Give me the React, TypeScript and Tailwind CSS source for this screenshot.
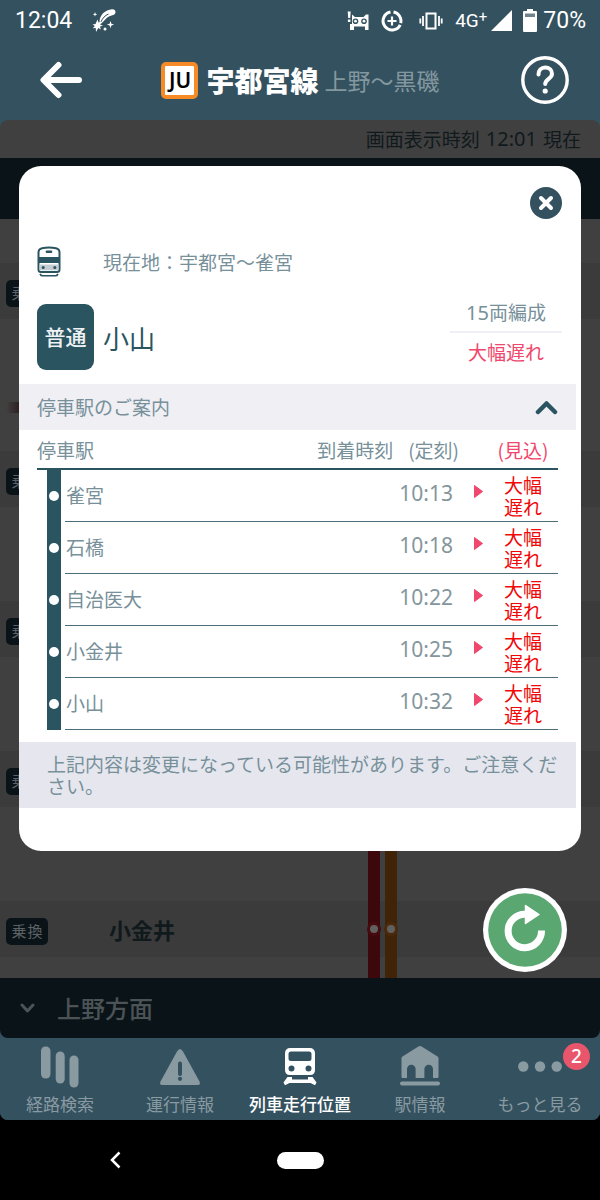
import React from "react";

type Stop = { name: string; time: string };

const stops: Stop[] = [
  { name: "雀宮", time: "10:13" },
  { name: "石橋", time: "10:18" },
  { name: "自治医大", time: "10:22" },
  { name: "小金井", time: "10:25" },
  { name: "小山", time: "10:32" },
];

function StatusBar() {
  return (
    <div className="flex h-10 items-center justify-between pl-[15px] pr-[14px] pt-px font-['Roboto',sans-serif] text-[23px] leading-none text-white">
      <div className="flex items-center gap-5">
        <span>12:04</span>
        <svg width="24" height="24" viewBox="0 0 24 24" fill="#fff" aria-hidden="true">
          <path d="M7.500 12C8 6 13 1 20 .3c3.500-.2 4.500 3 2.500 5-1.300 1.200-3 1-5 2-3.300 1.300-5 4.500-9 8z" />
          <path d="M9 13C10.500 9 13 6.500 16.500 5" fill="none" stroke="#345160" strokeWidth="1" />
          <path d="M5.500 10.500l1 3 3-1-1.300 3 2.800 1.200-3 .8.8 3-2.500-1.500L4 23l-.3-4-2.900.2 2-2.200-2.300-1.500 3-.5z" />
          <path d="M18.500 12l.9 2.700 2.700.9-2.700.9-.9 2.700-.9-2.700-2.700-.9 2.700-.9zM3 3l.6 1.700L5.300 5.300 3.600 6 3 7.600 2.400 6 .8 5.300l1.600-.6z" />
          <circle cx="13" cy="20" r="1.500" />
        </svg>
      </div>
      <div className="flex items-center">
        <svg className="mr-3" width="22" height="22" viewBox="0 0 22 22" aria-hidden="true">
          <path d="M.7 1.500h3l-.5 6.500h-2zM.9 9.500h2.500V12H.9zM5 4.500L8 7h8.500L19 4.500h2.500V20H18v-3.500H7V20H3v-6h2z" fill="#fff" />
          <circle cx="8.500" cy="11.200" r="2.800" fill="#345160" />
          <circle cx="17" cy="11.200" r="2.800" fill="#345160" />
          <circle cx="8.500" cy="11.200" r="1.400" fill="#fff" />
          <circle cx="17" cy="11.200" r="1.400" fill="#fff" />
        </svg>
        <svg className="mr-4" width="22" height="22" viewBox="0 0 22 22" fill="none" stroke="#fff" aria-hidden="true">
          <path d="M9.500 2.100a9 9 0 1 0 9.700 12.700M12.500 2.100a9 9 0 0 1 7.200 11" strokeWidth="3" />
          <path d="M11 6.500v9M6.500 11h9" strokeWidth="2.200" />
        </svg>
        <svg className="mr-3" width="24" height="20" viewBox="0 0 24 20" fill="none" stroke="#fff" aria-hidden="true">
          <rect x="7.500" y="2.500" width="9" height="15" strokeWidth="2" />
          <path d="M4 5v10M20 5v10M1.300 7.500v5M22.700 7.500v5" strokeWidth="1.800" />
        </svg>
        <span className="flex items-start text-[19px]">
          4G<span className="text-[15px] leading-[12px]">+</span>
        </span>
        <svg className="ml-1" width="22" height="21" viewBox="0 0 22 21" aria-hidden="true">
          <path d="M0 21L21 0v21z" fill="#fff" />
        </svg>
        <svg className="ml-[10px] mr-[6px]" width="14" height="23" viewBox="0 0 14 23" aria-hidden="true">
          <path d="M4 0h6v2h3a1 1 0 0 1 1 1v19a1 1 0 0 1-1 1H1a1 1 0 0 1-1-1V3a1 1 0 0 1 1-1h3z" fill="#fff" />
          <path d="M2 4.500h10V8H2z" fill="#6f838d" />
        </svg>
        <span>70%</span>
      </div>
    </div>
  );
}

function TitleBar() {
  return (
    <header className="grid h-20 grid-cols-[1fr_auto_1fr] items-center pl-8 pr-[31px]">
      <button type="button" aria-label="戻る" className="ml-2 justify-self-start">
        <svg width="44" height="38" viewBox="0 0 44 38" fill="none" stroke="#fff" strokeWidth="6" strokeLinecap="round" strokeLinejoin="round">
          <path d="M39 19H4M18.500 4L3.500 19l15 15" />
        </svg>
      </button>
      <h1 className="flex items-center text-white">
        <span className="mr-2 flex size-[37px] items-center justify-center rounded-[5px] border-4 border-[#f58a26] bg-white font-['Noto_Sans','Open_Sans',sans-serif] text-[21px] font-semibold leading-none text-black">
          JU
        </span>
        <span className="mr-[6px] text-[28px] font-black leading-10">宇都宮線</span>
        <span className="text-[23px] leading-10 text-[#83979f]">上野～黒磯</span>
      </h1>
      <button type="button" aria-label="ヘルプ" className="justify-self-end">
        <svg width="48" height="48" viewBox="0 0 48 48" fill="none" stroke="#fff" strokeLinecap="round" strokeLinejoin="round">
          <circle cx="24" cy="24" r="22.200" strokeWidth="3.400" />
          <path d="M17.500 18.500c0-4 2.800-7 6.700-7s6.800 2.700 6.800 6.200c0 5-6.800 5.200-6.800 10.300" strokeWidth="4" />
          <circle cx="24.200" cy="35" r="2.600" fill="#fff" stroke="none" />
        </svg>
      </button>
    </header>
  );
}

function Tracks({ dots }: { dots?: boolean }) {
  return (
    <div className="flex gap-[5px] self-stretch">
      <div className="flex w-3 items-center justify-center bg-[#3d080b]">
        {dots && <span className="size-[14px] shrink-0 rounded-full border-[3px] border-[#470b0e] bg-[#606060]" />}
      </div>
      <div className="flex w-3 items-center justify-center bg-[#412308]">
        {dots && <span className="size-[14px] shrink-0 rounded-full border-[3px] border-[#4b290b] bg-[#606060]" />}
      </div>
    </div>
  );
}

function Between({ className, children }: { className: string; children?: React.ReactNode }) {
  return (
    <div className={`flex ${className}`}>
      <div className="w-[61.4%] shrink-0">{children}</div>
      <Tracks />
    </div>
  );
}

function Station({ name }: { name?: string }) {
  return (
    <div className="flex h-14 items-center bg-[#3b3b3b]">
      <div className="flex w-[61.4%] shrink-0 items-center pl-[6px]">
        <span className="mt-1 flex h-[27px] w-[42px] items-center justify-center gap-px rounded-[5px] bg-[#0a1418] text-[15px] text-[#5d6264]">
          <span>乗</span>
          <span>換</span>
        </span>
        {name && <span className="ml-[61px] text-[22px] font-bold text-[#10191c]">{name}</span>}
      </div>
      <Tracks dots />
    </div>
  );
}

function LineMap() {
  return (
    <div className="overflow-hidden rounded-lg bg-[#404040]">
      <div className="flex h-[38px] items-center justify-end gap-[6px] pr-[19px] text-[19px] text-[#10191c]">
        <span>画面表示時刻</span>
        <span className="font-['Noto_Sans',sans-serif] text-[20px]">12:01</span>
        <span>現在</span>
      </div>
      <div className="h-[61px] bg-[#0a1418]" />
      <Between className="h-11" />
      <Station />
      <Between className="h-[132px]">
        <div className="ml-[6px] mt-[83px] h-[11px] w-4 bg-linear-to-r from-[#404040] to-[#2a1a1c]" />
      </Between>
      <Station />
      <Between className="h-[94px]" />
      <Station />
      <Between className="h-[94px]" />
      <Station />
      <Between className="h-[94px]" />
      <Station name="小金井" />
      <Between className="h-[21px]" />
      <button type="button" className="flex h-[60px] w-full items-center bg-[#0a1418] pl-5 text-[24px] font-medium text-[#4c5356]">
        <svg className="mr-[22px]" width="15" height="11" viewBox="0 0 15 11" fill="none" stroke="#4c5356" strokeWidth="3" strokeLinecap="round" strokeLinejoin="round" aria-hidden="true">
          <path d="M2 2l5.500 6L13 2" />
        </svg>
        上野方面
      </button>
    </div>
  );
}

function TrainIcon() {
  return (
    <svg width="24" height="31" viewBox="0 0 24 31" aria-hidden="true">
      <path d="M1.500 6.500C1.500 3.500 3 2.700 5 2.300c4-.8 10-.8 14 0 2 .4 3.500 1.200 3.500 4.200V23.500c0 1.700-.8 2.500-2.500 2.500H4c-1.700 0-2.500-.8-2.500-2.500z" fill="#fff" stroke="#2b5461" strokeWidth="2" />
      <rect x="8.800" y="4.500" width="6.400" height="2.600" rx=".8" fill="#2b5461" />
      <path d="M1.500 11h21v6h-21z" fill="#2b5461" />
      <path d="M2.500 18.500h19V24.300h-19z" fill="#c3ccd1" />
      <circle cx="6.200" cy="21.400" r="1.500" fill="#2b5461" />
      <circle cx="17.800" cy="21.400" r="1.500" fill="#2b5461" />
      <path d="M3 28q1 1.800 2.500 1.800h13Q20 29.800 21 28" fill="none" stroke="#2b5461" strokeWidth="1.600" />
    </svg>
  );
}

function TrainDialog() {
  return (
    <section role="dialog" aria-label="列車情報" className="absolute inset-x-[19px] top-[46px] rounded-[22px] bg-white pb-[43px] text-[19px] text-[#77909a]">
      <div className="flex justify-end pr-[19px] pt-[21px]">
        <button type="button" aria-label="閉じる">
          <svg width="32" height="32" viewBox="0 0 32 32">
            <circle cx="16" cy="16" r="16" fill="#345160" />
            <path d="M11 11l10 10M21 11L11 21" stroke="#fff" strokeWidth="4" strokeLinecap="round" />
          </svg>
        </button>
      </div>

      <div className="mt-[27px] flex items-center pl-[18px]">
        <TrainIcon />
        <p className="ml-[42px] leading-7">現在地：宇都宮～雀宮</p>
      </div>

      <div className="mb-[14px] mt-4 flex items-end justify-between pl-[18px] pr-[19px]">
        <div className="flex items-center gap-[9px]">
          <span className="flex h-[66px] w-[57px] items-center justify-center rounded-[9px] bg-[#2b5461] text-[21px] font-medium text-[#eef2f4]">
            普通
          </span>
          <h2 className="text-[26px] text-[#2b5461]">小山</h2>
        </div>
        <div className="w-28 text-center leading-[37px]">
          <p className="border-b-2 border-[#efeff4]">
            <span className="font-['Noto_Sans',sans-serif] text-[20px]">15</span>両編成
          </p>
          <p className="text-[#f0476c]">大幅遅れ</p>
        </div>
      </div>

      <button type="button" aria-expanded="true" className="flex h-[46px] w-[calc(100%-5px)] items-center justify-between bg-[#efeff4] pl-[18px] pr-[18px]">
        <span>停車駅のご案内</span>
        <svg width="23" height="15" viewBox="0 0 23 15" fill="none" stroke="#2b5461" strokeWidth="4.500" strokeLinecap="round" strokeLinejoin="round" aria-hidden="true">
          <path d="M3 12l8.500-8.500L20 12" />
        </svg>
      </button>

      <div className="pl-[18px] pr-[23px]">
        <table className="w-full border-separate border-spacing-0">
          <thead>
            <tr className="h-10 leading-[37px]">
              <th colSpan={2} className="border-b-2 border-[#2b5461] p-0 text-left font-normal">
                停車駅
              </th>
              <th className="w-40 border-b-2 border-[#2b5461] p-0 pr-[9px] font-normal">
                <span className="flex justify-end gap-[15px] whitespace-nowrap">
                  <span>到着時刻</span>
                  <span>(定刻)</span>
                </span>
              </th>
              <th colSpan={2} className="border-b-2 border-[#2b5461] p-0 pl-5 text-center font-normal text-[#f0476c]">
                (見込)
              </th>
            </tr>
          </thead>
          <tbody>
            {stops.map((stop) => (
              <tr key={stop.name}>
                <td className="w-7 p-0 pl-[10px]">
                  <span className="flex h-[52px] w-[14px] items-center justify-center bg-[#2b5461]">
                    <span className="size-[10px] rounded-full bg-white" />
                  </span>
                </td>
                <td className="border-b border-[#4c6d79] p-0 pl-px">{stop.name}</td>
                <td className="border-b border-[#4c6d79] p-0 pb-1 pr-[15px] text-right font-['Noto_Sans',sans-serif] text-[21px] text-[#84969c]">
                  {stop.time}
                </td>
                <td className="w-5 border-b border-[#4c6d79] p-0 pb-2">
                  <svg className="mx-auto block" width="9" height="13" viewBox="0 0 9 13" aria-hidden="true">
                    <path d="M.5.500L8.500 6.500.5 12.500z" fill="#f0476c" stroke="#f0476c" strokeLinejoin="round" />
                  </svg>
                </td>
                <td className="w-[70px] border-b border-[#4c6d79] px-4 py-0 leading-[22px] text-[#f00808]">大幅遅れ</td>
              </tr>
            ))}
          </tbody>
        </table>
      </div>

      <p className="mr-[5px] mt-3 bg-[#e6e7ee] py-[11px] pl-[28px] pr-3 leading-[22px]">
        上記内容は変更になっている可能性があります。ご注意ください。
      </p>
    </section>
  );
}

function ReloadButton() {
  return (
    <button type="button" aria-label="更新" className="absolute bottom-[66px] right-[33px] rounded-full">
      <svg width="84" height="84" viewBox="0 0 84 84">
        <circle cx="42" cy="42" r="42" fill="#fff" />
        <circle cx="42" cy="42" r="36.800" fill="#5aa772" />
        <path d="M58.500 42.500A16.700 16.700 0 1 1 42 26.300" fill="none" stroke="#fff" strokeWidth="7" />
        <path d="M42.500 17.500L56 26.500 42.500 35.500z" fill="#fff" stroke="#fff" strokeWidth="1.500" strokeLinejoin="round" />
      </svg>
    </button>
  );
}

const iconProps = { width: 44, height: 44, viewBox: "0 0 44 44", fill: "currentColor", "aria-hidden": true } as const;

function BarsIcon() {
  return (
    <svg {...iconProps}>
      <rect x="3" y="2.500" width="9.500" height="32" rx="4.500" />
      <rect x="17.700" y="7.500" width="9" height="32" rx="4.500" />
      <rect x="31.500" y="11.500" width="9" height="32" rx="4.500" />
    </svg>
  );
}

function WarningIcon() {
  return (
    <svg {...iconProps}>
      <path d="M19 7.500q3-5 6 0l16.500 30q1.500 3.500-2 3.500h-35q-3.500 0-2-3.500z" />
      <path d="M22 19.500v10.500" stroke="#345160" strokeWidth="4" strokeLinecap="round" />
      <circle cx="22" cy="34.800" r="2.100" fill="#345160" />
    </svg>
  );
}

function TrainTabIcon() {
  return (
    <svg {...iconProps}>
      <path fillRule="evenodd" d="M12.500 4h19Q37 4 37 9.500V26q0 5-5 5H12q-5 0-5-5V9.500Q7 4 12.500 4zM13 7.500q-2.500 0-2.500 2.500v4.500q0 2.500 2.500 2.500h18q2.500 0 2.500-2.500V10q0-2.500-2.500-2.500zM13.500 21.500a3 3 0 1 0 0 6 3 3 0 0 0 0-6zM30.500 21.500a3 3 0 1 0 0 6 3 3 0 0 0 0-6z" />
      <path d="M9.500 33h4.500v2.500h16V33h4.500l4 5.500-1.500 2.700-4.500-2.200H11.500L7 41.200l-1.500-2.700z" />
    </svg>
  );
}

function StationIcon() {
  return (
    <svg {...iconProps}>
      <path d="M22 2q1 0 2 .7l15.500 9.800q1 .7 1 2V33q0 1-1 1h-4.500v-9a4.300 4.300 0 0 0-8.600 0v9h-8.800v-9a4.300 4.300 0 0 0-8.600 0v9H4.500q-1 0-1-1V14.500q0-1.300 1-2L20 2.700q1-.7 2-.7z" />
      <rect x="2" y="37.500" width="40" height="4" rx="2" />
    </svg>
  );
}

function MoreIcon() {
  return (
    <svg {...iconProps}>
      <circle cx="5.300" cy="22.500" r="5.200" />
      <circle cx="22" cy="22.500" r="5.200" />
      <circle cx="38.700" cy="22.500" r="5.200" />
    </svg>
  );
}

const tabs = [
  { label: "経路検索", Icon: BarsIcon },
  { label: "運行情報", Icon: WarningIcon },
  { label: "列車走行位置", Icon: TrainTabIcon, active: true },
  { label: "駅情報", Icon: StationIcon },
  { label: "もっと見る", Icon: MoreIcon, badge: 2 },
];

function TabBar() {
  return (
    <nav className="grid grid-cols-5 rounded-b-lg bg-[#345160] pb-1 pt-[6px]">
      {tabs.map(({ label, Icon, active, badge }) => (
        <a
          key={label}
          href="#"
          aria-current={active ? "page" : undefined}
          className={`relative flex flex-col items-center gap-1 text-[17px] leading-6 ${active ? "font-medium text-white" : "text-[#899aa1]"}`}
        >
          <Icon />
          <span className="whitespace-nowrap">{label}</span>
          {badge && (
            <span className="absolute -top-px right-[10px] flex size-[27px] items-center justify-center rounded-full bg-[#e9566b] font-['Noto_Sans',sans-serif] text-[19px] font-medium leading-none text-white">
              {badge}
            </span>
          )}
        </a>
      ))}
    </nav>
  );
}

function SystemBar() {
  return (
    <div className="grid h-20 grid-cols-[1fr_auto_1fr] items-center">
      <button type="button" aria-label="戻る" className="ml-[109px] justify-self-start">
        <svg width="12" height="18" viewBox="0 0 12 18" fill="none" stroke="#fff" strokeWidth="2.500">
          <path d="M10.500 1.500L3 9l7.500 7.500" />
        </svg>
      </button>
      <button type="button" aria-label="ホーム" className="h-[17px] w-[47px] rounded-full bg-white" />
    </div>
  );
}

export default function App() {
  return (
    <div className="min-h-screen bg-black font-['Noto_Sans_CJK_JP',sans-serif]">
      <div className="rounded-b-lg bg-[#345160]">
        <StatusBar />
        <TitleBar />
        <main className="relative">
          <LineMap />
          <TrainDialog />
          <ReloadButton />
        </main>
        <TabBar />
      </div>
      <SystemBar />
    </div>
  );
}
